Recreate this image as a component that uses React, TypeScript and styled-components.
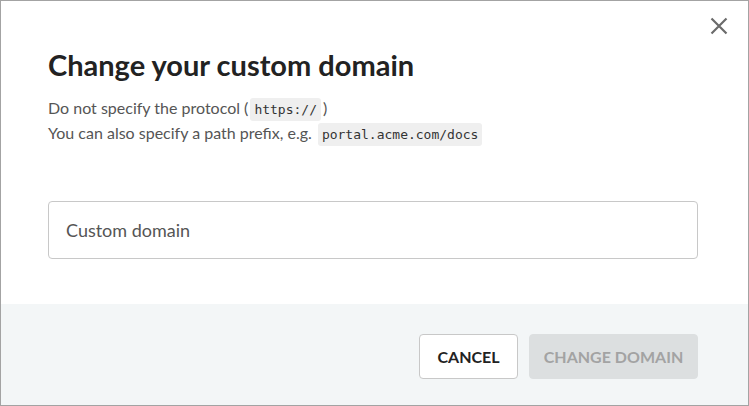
import React, { useState } from "react";
import styled, { createGlobalStyle } from "styled-components";

const GlobalStyle = createGlobalStyle`
  html, body {
    margin: 0;
    padding: 0;
    background: #fff;
  }
  body {
    font-family: Lato, "Open Sans", sans-serif;
  }
`;

const Dialog = styled.div`
  box-sizing: border-box;
  width: 749px;
  height: 406px;
  border: 1px solid #a3a3a3;
  display: flex;
  flex-direction: column;
  background: #fff;
  position: relative;
`;

const CloseButton = styled.button`
  position: absolute;
  top: 13px;
  right: 17px;
  width: 24px;
  height: 24px;
  padding: 0;
  border: none;
  background: none;
  color: #6b6b6b;
  cursor: pointer;
  display: flex;
  align-items: center;
  justify-content: center;
`;

const Body = styled.div`
  flex: 1;
  padding: 46px 50px 0 47px;
`;

const Title = styled.h1`
  margin: 0 0 12px;
  font-size: 29px;
  line-height: 36px;
  font-weight: 700;
  color: #222;
`;

const Hint = styled.p`
  margin: 0;
  font-size: 16px;
  line-height: 25px;
  color: #555;
`;

const Code = styled.code`
  font-family: "DejaVu Sans Mono", "Liberation Mono", monospace;
  font-size: 13px;
  line-height: 1;
  background: #efefef;
  color: #333;
  border-radius: 3px;
  padding: 4px 4px;
  margin: 0 2px;
`;

const DomainInput = styled.input`
  box-sizing: border-box;
  display: block;
  width: 650px;
  height: 58px;
  margin-top: 56px;
  padding: 0 17px;
  border: 1px solid #c8c8c8;
  border-radius: 4px;
  font-family: Lato, "Open Sans", sans-serif;
  font-size: 18px;
  color: #333;
  outline: none;

  &::placeholder {
    color: #555;
  }
`;

const Footer = styled.div`
  height: 101px;
  box-sizing: border-box;
  background: #f3f6f7;
  display: flex;
  justify-content: flex-end;
  align-items: flex-start;
  gap: 11px;
  padding: 30px 50px 0 0;
`;

const Button = styled.button<{ $primary?: boolean }>`
  box-sizing: border-box;
  height: 45px;
  width: ${(p) => (p.$primary ? "169px" : "99px")};
  padding: 0;
  border-radius: 4px;
  border: 1px solid ${(p) => (p.$primary ? "#dcdfe0" : "#c8c8c8")};
  background: ${(p) => (p.$primary ? "#dcdfe0" : "#fff")};
  color: ${(p) => (p.$primary ? "#a3a3a3" : "#222")};
  font-family: Lato, "Open Sans", sans-serif;
  font-size: 16px;
  font-weight: 700;
  text-transform: uppercase;
  cursor: ${(p) => (p.$primary ? "default" : "pointer")};
`;

export default function App() {
  const [domain, setDomain] = useState("");

  return (
    <>
      <GlobalStyle />
      <Dialog>
        <CloseButton aria-label="Close">
          <svg width="18" height="18" viewBox="0 0 18 18">
            <path d="M1.5 1.5 L16.5 16.5 M16.5 1.5 L1.5 16.5" stroke="currentColor" strokeWidth="2.2" />
          </svg>
        </CloseButton>
        <Body>
          <Title>Change your custom domain</Title>
          <Hint>
            Do not specify the protocol (<Code>https://</Code>)
          </Hint>
          <Hint>
            You can also specify a path prefix, e.g. <Code>portal.acme.com/docs</Code>
          </Hint>
          <DomainInput
            placeholder="Custom domain"
            value={domain}
            onChange={(e) => setDomain(e.target.value)}
          />
        </Body>
        <Footer>
          <Button>Cancel</Button>
          <Button $primary disabled={!domain}>Change domain</Button>
        </Footer>
      </Dialog>
    </>
  );
}
